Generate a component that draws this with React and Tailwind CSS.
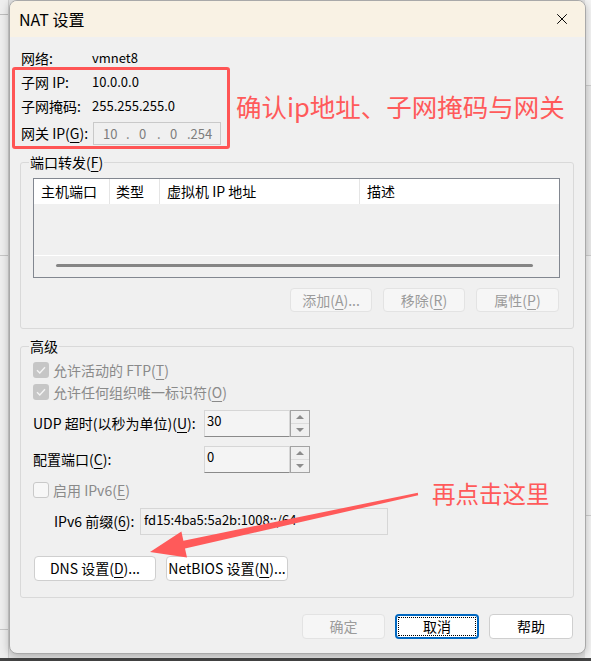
import { X } from 'lucide-react'

const FONT = "font-['Noto_Sans_CJK_SC','Noto_Sans',sans-serif]"

function Key({ k }) {
  return <span className="underline underline-offset-[3px] decoration-1">{k}</span>
}

function GroupBox({ title, className, children }) {
  return (
    <div className={`relative border border-[#d9d9d9] rounded-[3px] ${className}`}>
      <span className="absolute left-[8px] -top-[11px] bg-[#f0f0f0] px-[1px] text-[14px] leading-[20px]">
        {title}
      </span>
      {children}
    </div>
  )
}

function Btn({ children, disabled, focus, w = 'w-[82px]', h = 'h-[24px]' }) {
  if (focus) {
    return (
      <div className={`${w} ${h} rounded-[4px] border-2 border-[#0067c0] bg-white p-[1px]`}>
        <div className="h-full border border-dotted border-black flex items-center justify-center text-[14px]">
          {children}
        </div>
      </div>
    )
  }
  return (
    <div
      className={`${w} ${h} rounded-[4px] border flex items-center justify-center text-[14px] ${
        disabled
          ? 'bg-[#f6f6f6] border-[#e3e3e3] text-[#9b9b9b]'
          : 'bg-white border-[#cfcfcf] text-black'
      }`}
    >
      {children}
    </div>
  )
}

function CheckBox({ checked }) {
  if (checked) {
    return (
      <span className="w-[16px] h-[16px] rounded-[3px] bg-[#c6c6c6] flex items-center justify-center shrink-0">
        <svg width="10" height="8" viewBox="0 0 10 8">
          <path d="M1 4.2 L3.8 7 L9 1.2" fill="none" stroke="#f4f4f4" strokeWidth="1.4" />
        </svg>
      </span>
    )
  }
  return <span className="w-[16px] h-[16px] rounded-[3px] bg-[#f7f7f7] border border-[#c9c9c9] shrink-0" />
}

function Spin({ value }) {
  return (
    <div className="flex w-[106px] h-[27px]">
      <div className="flex-1 bg-[#f4f4f4] border border-[#d6d6d6] border-b-[#8a8a8a] pl-[2px] pt-[1px] text-[13px] leading-[18px]">
        {value}
      </div>
      <div className="w-[20px] border border-[#a3a3a3] flex flex-col bg-[#f0f0f0]">
        <div className="flex-1 border-b border-[#dcdcdc] flex items-center justify-center">
          <svg width="8" height="4" viewBox="0 0 8 4"><path d="M0 4 L4 0 L8 4 Z" fill="#8c8c8c" /></svg>
        </div>
        <div className="flex-1 flex items-center justify-center">
          <svg width="8" height="4" viewBox="0 0 8 4"><path d="M0 0 L4 4 L8 0 Z" fill="#8c8c8c" /></svg>
        </div>
      </div>
    </div>
  )
}

export default function App() {
  return (
    <div className={`relative w-[591px] h-[661px] overflow-hidden bg-[#e4e4e4] text-black ${FONT}`}>
      {/* window behind the dialog */}
      <div className="absolute left-0 top-0 w-[9px] h-[661px] bg-[#eeeeee] border-r border-[#d0d0d0]">
        <div className="mt-[14px] h-px bg-[#bdbdbd]" />
        <div className="mt-[240px] h-px bg-[#c6c6c6]" />
        <div className="mt-[373px] h-px bg-[#c6c6c6]" />
      </div>
      <div className="absolute right-0 top-0 w-[6px] h-[661px] bg-[#f4f4f4] overflow-hidden">
        <div className="h-[86px] border-b border-[#cfcfcf]" />
        <div className="h-[170px] border-b border-[#cfcfcf] bg-[#eaeaea]" />
        <div className="h-[260px] border-b border-[#cfcfcf]" />
      </div>
      <div className="absolute left-0 bottom-0 w-[591px] h-[3px] bg-[#444]" />

      {/* dialog */}
      <div className="relative ml-[9px] w-[577px] h-[654px] bg-[#f0f0f0] border border-[#a9a9a9] rounded-[8px] shadow-[0_2px_8px_rgba(0,0,0,0.25)] flex flex-col overflow-hidden">
        <div className="h-[36px] shrink-0 bg-[#f9f2e4] flex items-center justify-between pl-[9px] pr-[14px]">
          <span className="text-[16px] leading-none">NAT 设置</span>
          <X size={18} strokeWidth={1.3} className="text-black" />
        </div>

        <div className="flex flex-col pl-[10px] pr-[11px] pt-[9px]">
          <div className="h-[24px] flex items-center ml-[1px]">
            <span className="w-[71px] text-[14px]">网络:</span>
            <span className="text-[13px]">vmnet8</span>
          </div>
          <div className="h-[24px] flex items-center ml-[1px]">
            <span className="w-[71px] text-[14px]">子网 IP:</span>
            <span className="text-[13px]">10.0.0.0</span>
          </div>
          <div className="h-[24px] flex items-center ml-[1px]">
            <span className="w-[71px] text-[14px] whitespace-nowrap">子网掩码:</span>
            <span className="text-[13px]">255.255.255.0</span>
          </div>
          <div className="mt-[4px] h-[23px] flex items-center ml-[1px]">
            <span className="w-[72px] text-[14px] whitespace-nowrap">网关 IP(<Key k="G" />):</span>
            <div className="w-[128px] h-[23px] border border-[#c9c9c9] bg-[#f0f0f0] flex items-center text-[13px] text-[#7d7d7d] pl-[9px]">
              <span className="w-[23px]">10</span>
              <span className="w-[13px]">.</span>
              <span className="w-[18px]">0</span>
              <span className="w-[13px]">.</span>
              <span className="w-[17px]">0</span>
              <span>.254</span>
            </div>
          </div>

          <GroupBox title={<>端口转发(<Key k="F" />)</>} className="mt-[17px] h-[167px]">
            <div className="pt-[15px] pl-[12px] pr-[13px]">
              <div className="h-[100px] border border-[#828790] bg-[#f0f0f0] flex flex-col">
                <div className="h-[25px] bg-white flex text-[14px]">
                  <div className="w-[76px] border-r border-[#e5e5e5] pl-[7px] flex items-center">主机端口</div>
                  <div className="w-[50px] border-r border-[#e5e5e5] pl-[6px] flex items-center">类型</div>
                  <div className="w-[200px] border-r border-[#e5e5e5] pl-[7px] flex items-center">虚拟机 IP 地址</div>
                  <div className="flex-1 pl-[7px] flex items-center">描述</div>
                </div>
                <div className="flex-1" />
                <div className="h-[22px] border-t border-white pt-[8px]">
                  <div className="ml-[22px] w-[477px] h-[3px] bg-[#858585] rounded-full" />
                </div>
              </div>
              <div className="mt-[10px] flex justify-end gap-[11px] pr-[1px]">
                <Btn disabled>添加(<Key k="A" />)...</Btn>
                <Btn disabled>移除(<Key k="R" />)</Btn>
                <Btn disabled w="w-[83px]">属性(<Key k="P" />)</Btn>
              </div>
            </div>
          </GroupBox>

          <GroupBox title="高级" className="mt-[17px] h-[252px]">
            <div className="pt-[12px] pl-[12px] flex flex-col text-[14px]">
              <div className="h-[22px] flex items-center gap-[4px] text-[#8a8a8a]">
                <CheckBox checked />
                <span>允许活动的 FTP(<Key k="T" />)</span>
              </div>
              <div className="h-[22px] flex items-center gap-[4px] text-[#8a8a8a]">
                <CheckBox checked />
                <span>允许任何组织唯一标识符(<Key k="O" />)</span>
              </div>
              <div className="mt-[7px] h-[27px] flex items-center">
                <span className="w-[171px] whitespace-nowrap">UDP 超时(以秒为单位)(<Key k="U" />):</span>
                <Spin value="30" />
              </div>
              <div className="mt-[9px] h-[27px] flex items-center">
                <span className="w-[171px] whitespace-nowrap">配置端口(<Key k="C" />):</span>
                <Spin value="0" />
              </div>
              <div className="mt-[6px] h-[22px] flex items-center gap-[4px] text-[#8a8a8a]">
                <CheckBox />
                <span>启用 IPv6(<Key k="E" />)</span>
              </div>
              <div className="mt-[7px] h-[27px] flex items-center pl-[21px]">
                <span className="w-[86px] whitespace-nowrap">IPv6 前缀(<Key k="6" />):</span>
                <div className="w-[248px] h-[27px] bg-[#f0f0f0] border border-[#d6d6d6] pl-[3px] pt-[2px] text-[13px] leading-[18px]">
                  fd15:4ba5:5a2b:1008::/64
                </div>
              </div>
              <div className="mt-[21px] flex gap-[10px] pl-[1px]">
                <Btn w="w-[122px]" h="h-[25px]">DNS 设置(<Key k="D" />)...</Btn>
                <Btn w="w-[122px]" h="h-[25px]">NetBIOS 设置(<Key k="N" />)...</Btn>
              </div>
            </div>
          </GroupBox>

          <div className="mt-[16px] flex justify-end gap-[10px] pr-[1px]">
            <Btn disabled w="w-[83px]" h="h-[25px]">确定</Btn>
            <Btn focus w="w-[84px]" h="h-[25px]">取消</Btn>
            <Btn w="w-[84px]" h="h-[25px]">帮助</Btn>
          </div>
        </div>
      </div>

      {/* annotations */}
      <div className="absolute left-[12px] top-[67px] w-[218px] h-[82px] border-[3px] border-[#ff5555] rounded-[3px] pointer-events-none" />
      <span className="absolute left-[236px] top-[90px] text-[25.5px] leading-[32px] text-[#ff5a5a] whitespace-nowrap">
        确认ip地址、子网掩码与网关
      </span>
      <span className="absolute left-[432px] top-[478px] text-[23.5px] leading-[30px] text-[#ff5a5a] whitespace-nowrap">
        再点击这里
      </span>
      <svg className="absolute left-0 top-0 pointer-events-none" width="591" height="661" viewBox="0 0 591 661">
        <polygon
          points="150,552 181.4,531.5 183.4,540.7 417.8,492.8 418.2,495.2 185,548.5 187,557.5"
          fill="#ff5a5a"
        />
      </svg>
    </div>
  )
}
